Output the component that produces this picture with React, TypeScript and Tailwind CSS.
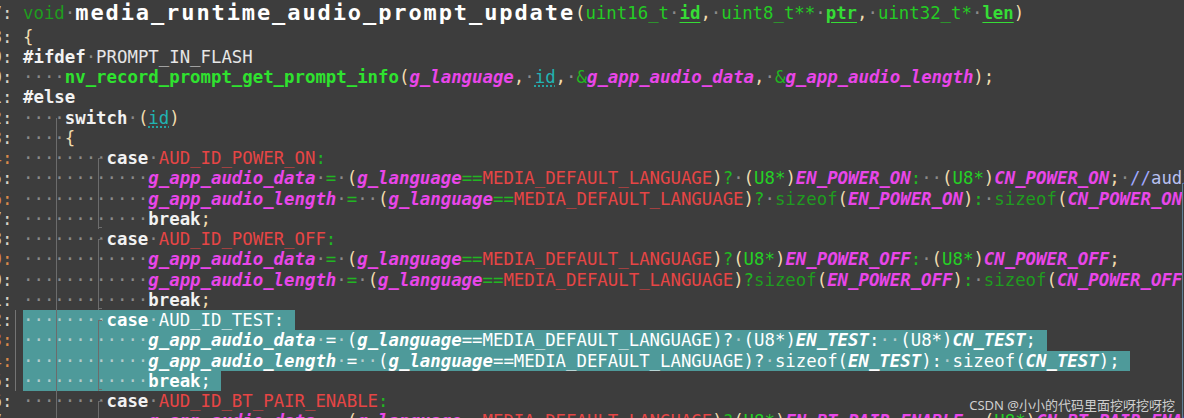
import React from "react";

type Kind =
  | "kw" | "vd" | "ty" | "pm" | "pu" | "op" | "fn" | "gv"
  | "lid" | "mc" | "u8" | "cm" | "cm2" | "pp" | "ws";
type Tok = [Kind, string];

// colour and font are split so a selected row can drop the colour and keep the face
const COLOR: Record<Kind, string> = {
  kw: "text-[#f2f2f2]",
  vd: "text-[#1f9c1f]",
  ty: "text-[#24cc24]",
  pm: "text-[#36dc36]",
  pu: "text-[#f0dcae]",
  op: "text-[#22b522]",
  fn: "text-[#2fe22f]",
  gv: "text-[#e946e9]",
  lid: "text-[#21b3b3]",
  mc: "text-[#e64545]",
  u8: "text-[#25d025]",
  cm: "text-[#9fa8ff]",
  cm2: "text-[#b8c0f0]",
  pp: "text-[#e6e6e6]",
  ws: "text-[#8a8a8a]",
};

const FONT: Record<Kind, string> = {
  kw: "font-bold",
  vd: "",
  ty: "",
  pm: "font-bold underline underline-offset-[3px]",
  pu: "",
  op: "",
  fn: "font-bold",
  gv: "font-bold italic",
  lid: "underline decoration-dotted underline-offset-[3px]",
  mc: "",
  u8: "",
  cm: "",
  cm2: "",
  pp: "",
  ws: "",
};

const S = (n: number): Tok => ["ws", "·".repeat(n)];

const caseLine = (name: string): Tok[] => [
  S(8), ["kw", "case"], S(1), ["mc", name], ["op", ":"],
];

const dataLine = (en: string, cn: string, spQ: boolean, gap: number): Tok[] => [
  S(12), ["gv", "g_app_audio_data"], S(1), ["op", "="], S(1), ["pu", "("],
  ["gv", "g_language"], ["op", "=="], ["mc", "MEDIA_DEFAULT_LANGUAGE"],
  ["pu", ")"], ["op", "?"], ...(spQ ? [S(1)] : []),
  ["pu", "("], ["u8", "U8*"], ["pu", ")"], ["gv", en], ["op", ":"], S(gap),
  ["pu", "("], ["u8", "U8*"], ["pu", ")"], ["gv", cn], ["pu", ";"],
];

const lengthLine = (en: string, cn: string, eqGap: number, spQ: boolean): Tok[] => [
  S(12), ["gv", "g_app_audio_length"], S(1), ["op", "="], S(eqGap), ["pu", "("],
  ["gv", "g_language"], ["op", "=="], ["mc", "MEDIA_DEFAULT_LANGUAGE"],
  ["pu", ")"], ["op", "?"], ...(spQ ? [S(1)] : []),
  ["vd", "sizeof"], ["pu", "("], ["gv", en], ["pu", ")"], ["op", ":"], S(1),
  ["vd", "sizeof"], ["pu", "("], ["gv", cn], ["pu", ");"],
];

const breakLine: Tok[] = [S(12), ["kw", "break"], ["pu", ";"]];

const lines: Tok[][] = [
  [["pu", "{"]],
  [["kw", "#ifdef"], S(1), ["pp", "PROMPT_IN_FLASH"]],
  [
    S(4), ["fn", "nv_record_prompt_get_prompt_info"], ["pu", "("], ["gv", "g_language"],
    ["pu", ","], S(1), ["lid", "id"], ["pu", ","], S(1), ["op", "&"], ["gv", "g_app_audio_data"],
    ["pu", ","], S(1), ["op", "&"], ["gv", "g_app_audio_length"], ["pu", ");"],
  ],
  [["kw", "#else"]],
  [S(4), ["kw", "switch"], S(1), ["pu", "("], ["lid", "id"], ["pu", ")"]],
  [S(4), ["pu", "{"]],
  caseLine("AUD_ID_POWER_ON"),
  [...dataLine("EN_POWER_ON", "CN_POWER_ON", true, 2), S(1), ["cm", "//"], ["cm2", "audio_prompt"]],
  lengthLine("EN_POWER_ON", "CN_POWER_ON", 2, true),
  breakLine,
  caseLine("AUD_ID_POWER_OFF"),
  dataLine("EN_POWER_OFF", "CN_POWER_OFF", false, 1),
  lengthLine("EN_POWER_OFF", "CN_POWER_OFF", 1, false),
  breakLine,
  caseLine("AUD_ID_TEST"),
  dataLine("EN_TEST", "CN_TEST", true, 2),
  lengthLine("EN_TEST", "CN_TEST", 2, true),
  breakLine,
  caseLine("AUD_ID_BT_PAIR_ENABLE"),
  dataLine("EN_BT_PAIR_ENABLE", "CN_BT_PAIR_ENABLE", false, 1),
];

const SELECTED = [14, 15, 16, 17];
const ORANGE = [6, 8, 11, 15, 16];
// case blocks: [first row, last row] for the bracket guide
const BLOCKS: [number, number][] = [[6, 9], [10, 13], [14, 17], [18, 21]];

function Code({ toks, sel }: { toks: Tok[]; sel: boolean }) {
  return (
    <>
      {toks.map(([k, t], i) => (
        <span
          key={i}
          className={`${FONT[k]} ${sel ? (k === "ws" ? "text-[#b4cccc]" : "text-white") : COLOR[k]}`}
        >
          {t}
        </span>
      ))}
    </>
  );
}

function Guides({ idx }: { idx: number }) {
  const out: React.ReactNode[] = [];
  // switch level guide
  if (idx === 4) out.push(<div key="g1" className="absolute left-[56px] top-[10px] bottom-0 w-px bg-[#6c6c6c]" />);
  if (idx >= 5) out.push(<div key="g1" className="absolute left-[56px] top-0 bottom-0 w-px bg-[#6c6c6c]" />);
  for (const [a, b] of BLOCKS) {
    if (idx === a) {
      out.push(<div key="g2" className="absolute left-[98px] top-[10px] bottom-0 w-px bg-[#6c6c6c]" />);
      out.push(<div key="t1" className="absolute left-[98px] top-[10px] w-[4px] h-px bg-[#6c6c6c]" />);
    } else if (idx > a && idx <= b) {
      out.push(<div key="g2" className="absolute left-[98px] top-0 bottom-0 w-px bg-[#6c6c6c]" />);
      if (idx === b) out.push(<div key="t2" className="absolute left-[98px] bottom-[1px] w-[4px] h-px bg-[#6c6c6c]" />);
    }
  }
  return <>{out}</>;
}

function Row({ idx, toks }: { idx: number; toks: Tok[] }) {
  const sel = SELECTED.includes(idx);
  return (
    <div className="relative flex h-[20.25px] leading-[20.25px] whitespace-pre">
      <div className="relative flex w-[23px] shrink-0 justify-end overflow-hidden pr-[10.5px]">
        <span className={ORANGE.includes(idx) ? "text-[#d98a4a]" : "text-[#d4d4c8]"}>
          {String(1128 + idx)}:
        </span>
        {sel && <div className="absolute left-[15px] top-0 bottom-0 w-px bg-[#747474]" />}
      </div>
      <span className={sel ? "bg-[#4e9a9a]" : ""}>
        <Code toks={toks} sel={sel} />
        {sel && " "}
      </span>
      <Guides idx={idx} />
    </div>
  );
}

export default function App() {
  const head: Tok[] = [
    ["pu", "("], ["ty", "uint16_t"], S(1), ["pm", "id"], ["pu", ","], S(1),
    ["ty", "uint8_t**"], S(1), ["pm", "ptr"], ["pu", ","], S(1),
    ["ty", "uint32_t*"], S(1), ["pm", "len"], ["pu", ")"],
  ];

  return (
    <div className="relative w-[1184px] h-[418px] overflow-hidden bg-[#3d3d3d] font-['DejaVu_Sans_Mono',monospace] text-[17.35px]">
      {/* signature line */}
      <div className="flex h-[26.5px] leading-[26.5px] whitespace-pre">
        <div className="flex w-[23px] shrink-0 justify-end overflow-hidden pr-[10.5px]">
          <span className="text-[#d4d4c8]">1127:</span>
        </div>
        <span className="text-[#1f9c1f]">void</span>
        <span className="text-[#8a8a8a]">·</span>
        <span className="text-[22px] font-bold tracking-[1.9px] text-white">
          media_runtime_audio_prompt_update
        </span>
        <Code toks={head} sel={false} />
      </div>

      {lines.map((toks, i) => (
        <Row key={i} idx={i} toks={toks} />
      ))}

      {/* right margin line */}
      <div className="absolute left-[1182px] top-[183px] bottom-0 w-px bg-[#5f7f95]" />

      {/* watermark */}
      <div className="absolute right-[9px] top-[397px] text-[13px] leading-[16px] whitespace-nowrap text-[#cfcfcf] font-['Noto_Sans','Noto_Sans_CJK_SC',sans-serif]">
        CSDN @小小的代码里面挖呀挖呀挖
      </div>
    </div>
  );
}
